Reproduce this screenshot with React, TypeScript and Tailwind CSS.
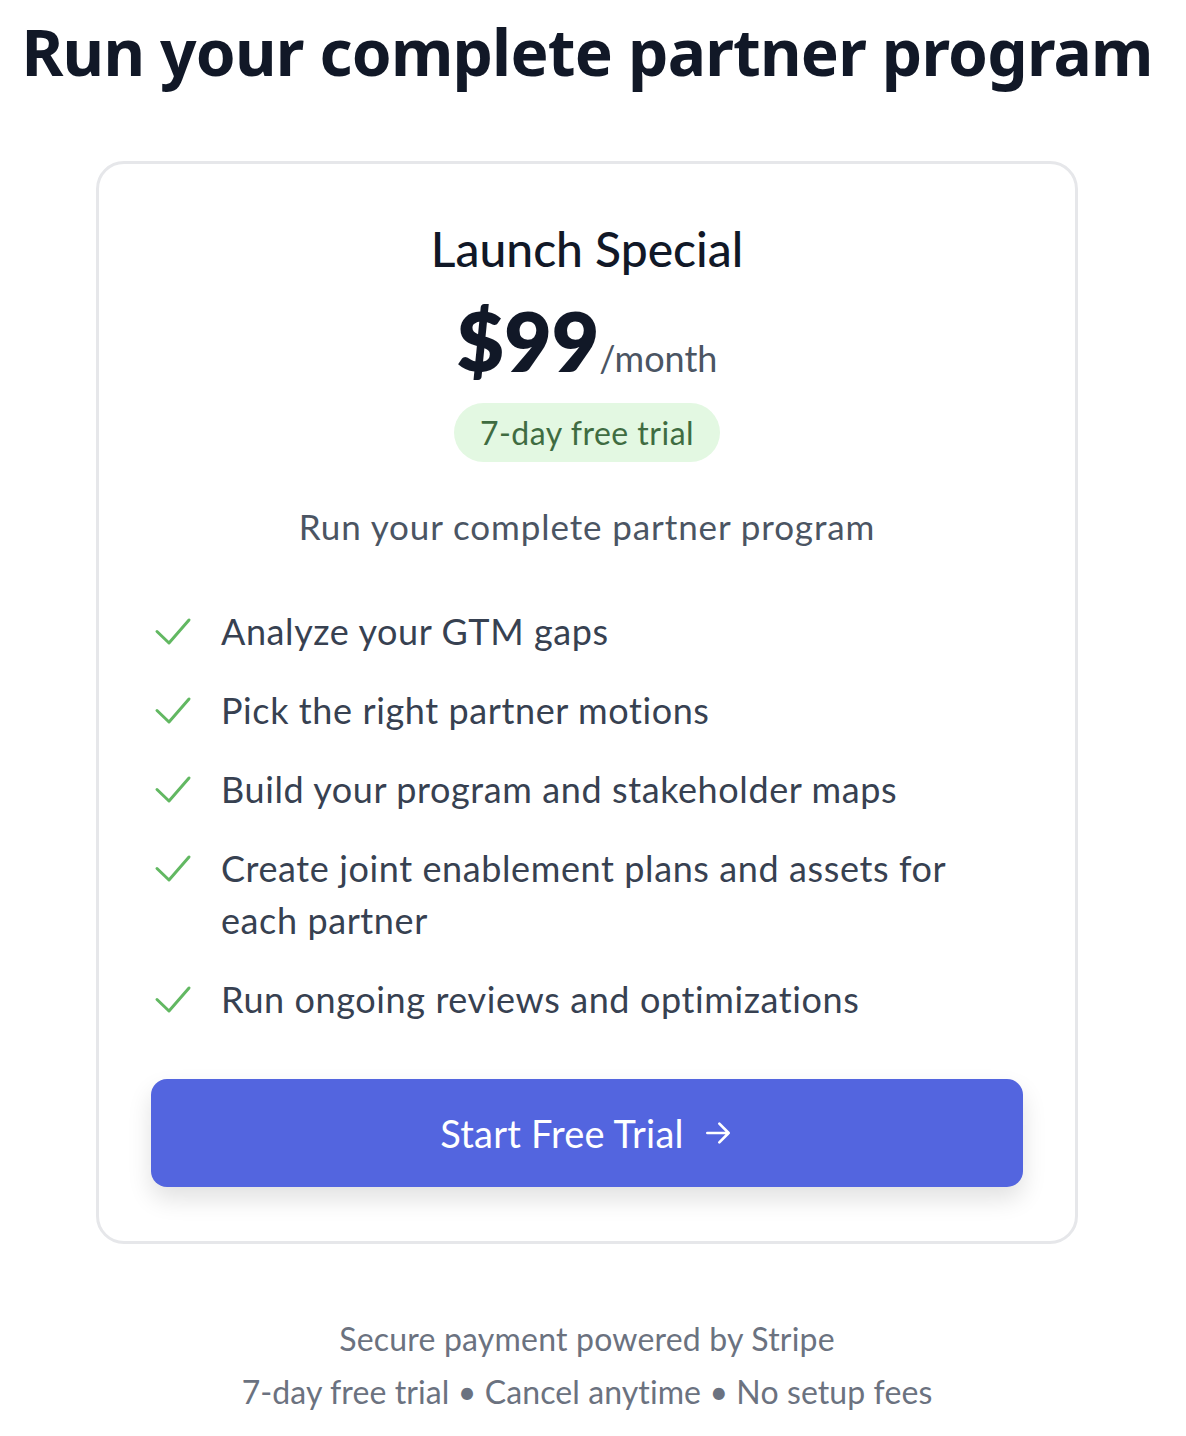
import React from "react";

const features = [
  "Analyze your GTM gaps",
  "Pick the right partner motions",
  "Build your program and stakeholder maps",
  "Create joint enablement plans and assets for each partner",
  "Run ongoing reviews and optimizations",
];

function Check() {
  return (
    <svg width="38" height="30" viewBox="0 0 38 30" fill="none" stroke="#62b862" strokeWidth="3" strokeLinecap="round" strokeLinejoin="round">
      <path d="M3 15.5L15 27L35 4" />
    </svg>
  );
}

export default function App() {
  return (
    <div className="w-[1186px] min-h-[1436px] bg-white flex flex-col items-center pr-[12px]" style={{ fontFamily: "Lato, 'Noto Sans', sans-serif" }}>
      <h1 className="mt-[14px] text-[64px] leading-[76px] font-bold text-[#111827] tracking-[-0.8px]" style={{ fontFamily: "'Noto Sans', sans-serif" }}>
        Run your complete partner program
      </h1>
      <div className="mt-[71px] w-[982px] border-[3px] border-[#e6e7ea] rounded-[28px] flex flex-col items-center pt-[57px] pb-[54px] px-[52px]">
        <div className="text-[48px] leading-[56px] text-[#111827] font-medium">Launch Special</div>
        <div className="mt-[19px] flex items-baseline h-[88px]">
          <span className="text-[82px] leading-[88px] font-extrabold text-[#111827]">$99</span>
          <span className="text-[36px] text-[#4b5563]">/month</span>
        </div>
        <div className="mt-[19px] h-[59px] px-[26px] rounded-full bg-[#e3f8e2] text-[#3f6c41] text-[32px] tracking-[0.5px] flex items-center">7-day free trial</div>
        <div className="mt-[42px] text-[35px] leading-[44px] tracking-[0.9px] text-[#4b5563]">Run your complete partner program</div>
        <ul className="mt-[57px] w-full flex flex-col gap-[27px]">
          {features.map((f) => (
            <li key={f} className="flex items-start text-[36px] leading-[52px] tracking-[0.6px] text-[#374151]">
              <span className="mt-[11px] ml-[3px] w-[67px] shrink-0"><Check /></span>
              <span className="max-w-[770px]">{f}</span>
            </li>
          ))}
        </ul>
        <button className="mt-[54px] w-full h-[108px] rounded-[16px] bg-[#5365df] text-white text-[38px] tracking-[0.2px] flex items-center justify-center gap-[18px] shadow-[0_12px_24px_rgba(0,0,0,0.12)]">
          <span>Start Free Trial</span>
          <svg width="32" height="32" viewBox="0 0 24 24" fill="none" stroke="white" strokeWidth="2" strokeLinecap="round" strokeLinejoin="round">
            <path d="M4 12h16M13 5l7 7-7 7" />
          </svg>
        </button>
      </div>
      <div className="mt-[75px] text-[32px] leading-[40px] tracking-[0.2px] text-[#6b7280]">Secure payment powered by Stripe</div>
      <div className="mt-[13px] text-[32px] leading-[40px] tracking-[0.1px] text-[#6b7280]">7-day free trial • Cancel anytime • No setup fees</div>
    </div>
  );
}
